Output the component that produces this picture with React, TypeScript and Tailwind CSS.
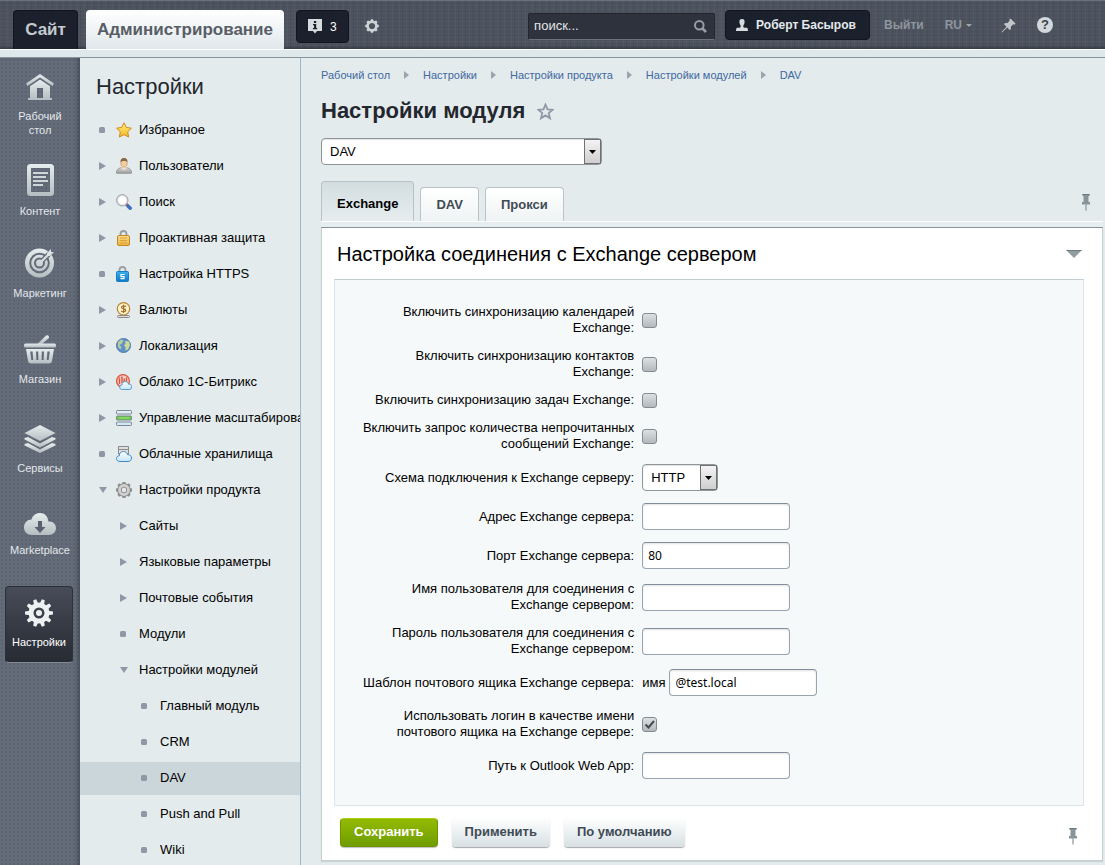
import { useState } from 'react';
import type { ReactNode } from 'react';
import clsx from 'clsx';

type Bullet = 'dot' | 'closed' | 'open';

interface MenuItem {
  label: string;
  bullet: Bullet;
  level: 0 | 1 | 2;
  icon?: ReactNode;
  active?: boolean;
}

/* ---------- shared icons ---------- */

function Teeth({ count, r, w, h }: { count: number; r: number; w: number; h: number }) {
  return (
    <>
      {Array.from({ length: count }, (_, i) => (
        <path
          key={i}
          d={`M${-w / 2 - 0.8} ${-r + h}L${-w / 2} ${-r}H${w / 2}L${w / 2 + 0.8} ${-r + h}Z`}
          transform={`rotate(${(360 / count) * i})`}
        />
      ))}
    </>
  );
}

function PushPin() {
  return (
    <svg width="10" height="17" viewBox="0 0 10 17" fill="#87949a">
      <path d="M1.500 0H8.500V2H7.500V8H9V10.500H1V8H2.500V2H1.500Z" />
      <path d="M4.400 10.500H5.600V16.500H4.400Z" />
      <path d="M1.500 0H8.500V1H1.500Z" fill="#6d797f" />
    </svg>
  );
}

function Defs() {
  return (
    <svg width="0" height="0" className="absolute">
      <defs>
        <linearGradient id="silver" x1="0" y1="0" x2="0" y2="1">
          <stop offset="0" stopColor="#e6edee" />
          <stop offset="1" stopColor="#b4bdc0" />
        </linearGradient>
        <linearGradient id="gold" x1="0" y1="0" x2="0" y2="1">
          <stop offset="0" stopColor="#fff08a" />
          <stop offset="1" stopColor="#f3b71f" />
        </linearGradient>
        <linearGradient id="brass" x1="0" y1="0" x2="0" y2="1">
          <stop offset="0" stopColor="#fbdc8c" />
          <stop offset="1" stopColor="#eeb33f" />
        </linearGradient>
        <linearGradient id="blue" x1="0" y1="0" x2="0" y2="1">
          <stop offset="0" stopColor="#3eb0ee" />
          <stop offset="1" stopColor="#0d79c4" />
        </linearGradient>
        <linearGradient id="cloud" x1="0" y1="0" x2="0" y2="1">
          <stop offset="0" stopColor="#ffffff" />
          <stop offset="1" stopColor="#c3e4fb" />
        </linearGradient>
        <linearGradient id="grey" x1="0" y1="0" x2="0" y2="1">
          <stop offset="0" stopColor="#dcdcdc" />
          <stop offset="1" stopColor="#9b9b9b" />
        </linearGradient>
      </defs>
    </svg>
  );
}

/* ---------- header ---------- */

function Header() {
  return (
    <header className="bg-[#4b525d] bg-[repeating-linear-gradient(90deg,rgba(255,255,255,0.03)_0_1px,transparent_1px_3px,rgba(0,0,0,0.05)_3px_4px,transparent_4px_7px),repeating-linear-gradient(0deg,rgba(255,255,255,0.03)_0_1px,transparent_1px_4px)]">
      <div className="flex h-[49px] items-start border-t border-[#69717b] pt-[9px] shadow-[inset_0_-3px_3px_-1px_rgba(0,0,0,0.25)]">
        <a
          href="#site"
          className="ml-[13px] flex h-[39px] w-[65px] items-center justify-center rounded-t border border-b-0 border-[#12151d] bg-[#1c202d] text-[17px] font-bold text-[#c3cbcf]"
        >
          Сайт
        </a>
        <a
          href="#admin"
          className="ml-2 flex h-[39px] w-[198px] items-center justify-center rounded-t bg-linear-to-b from-white to-[#e0e8eb] text-[17px] font-bold text-[#585d66]"
        >
          Администрирование
        </a>
        <button
          type="button"
          className="ml-3 flex h-[33px] w-[53px] items-center gap-2 rounded border border-[#12151d] bg-[#1c202d] pl-[11px] text-xs text-white"
        >
          <svg width="14" height="15" viewBox="0 0 14 15">
            <path d="M0 0H14V12H9L7 14.500L5 12H0Z" fill="#d5dcdf" />
            <path d="M5.900 2H8.200V4H5.900ZM5 5H8.200V9H9.200V10.200H4.900V9H6V6.200H5Z" fill="#1c202d" />
          </svg>
          3
        </button>
        <button type="button" aria-label="Параметры" className="ml-4 flex h-8 items-center">
          <svg width="14" height="14" viewBox="-7 -7 14 14" fill="#ccd3d6">
            <Teeth count={8} r={6.8} w={2} h={2} />
            <circle r="4.300" fill="none" stroke="#ccd3d6" strokeWidth="2.400" />
          </svg>
        </button>

        <div className="ml-auto mr-[52px] flex items-center">
          <form className="mt-[2px] flex h-[27px] w-[187px] items-center rounded-xs border border-[#23262f] border-b-[#6b727c] bg-[#2e323d] px-[5px]">
            <input
              type="text"
              aria-label="Поиск"
              placeholder="поиск..."
              className="min-w-0 flex-1 bg-transparent text-[13px] text-white placeholder-[#e3e6e8] outline-none"
            />
            <button type="submit" aria-label="Найти" className="mr-[2px]">
              <svg width="13" height="13" viewBox="0 0 13 13" fill="none" stroke="#989da5">
                <circle cx="5.300" cy="5.300" r="4.300" strokeWidth="2" />
                <path d="M8.500 8.500L12 12" strokeWidth="2.600" />
              </svg>
            </button>
          </form>
          <a
            href="#user"
            className="ml-2.5 flex h-[30px] w-[145px] items-center gap-2 rounded border border-[#12151d] bg-[#1b202d] pl-2.5 text-xs font-bold text-[#e4eaec]"
          >
            <svg width="12" height="13" viewBox="0 0 12 13" fill="#d5dcdf">
              <path d="M6 0C7.900 0 8.700 1.300 8.600 3C8.500 4.800 7.700 6 7.300 6.800C7.100 8 7.500 8.300 8.500 8.800H11C11.700 9.300 12 10.500 12 12H0C0 10.500 0.300 9.300 1 8.800H3.500C4.500 8.300 4.900 8 4.700 6.800C4.300 6 3.500 4.800 3.400 3C3.300 1.300 4.100 0 6 0Z" />
            </svg>
            Роберт Басыров
          </a>
          <a href="#logout" className="ml-[14px] text-xs font-bold text-[#8f969e]">
            Выйти
          </a>
          <button type="button" className="ml-[21px] flex items-center gap-1 text-xs font-bold text-[#8f969e]">
            RU
            <svg width="6" height="3" viewBox="0 0 6 3" fill="#a0a6ad">
              <path d="M0 0H6L3 3Z" />
            </svg>
          </button>
          <button type="button" aria-label="Закрепить" className="ml-[29px]">
            <svg width="15" height="15" viewBox="0 0 15 15" fill="#c0c6ca">
              <path d="M9.500 0.500L14.500 5.500L13.500 6.700L12.300 6.300L9.800 8.800C10.100 10.200 9.900 11.300 9 12.200L6.300 9.500L1.300 14.200L0.500 14.500L0.800 13.700L5.500 8.700L2.800 6C3.700 5.100 4.800 4.900 6.200 5.200L8.700 2.700L8.300 1.500Z" />
            </svg>
          </button>
          <button
            type="button"
            aria-label="Справка"
            className="ml-[21px] flex size-4 items-center justify-center rounded-full bg-[#d2d8db] text-[13px] leading-4 font-bold text-[#3c424d]"
          >
            ?
          </button>
        </div>
      </div>
      <div className="h-[9px] border-t border-b border-t-white border-b-[#87959b] bg-[#dfe8eb]" />
    </header>
  );
}

/* ---------- left column ---------- */

const sections: { label: string; top: string; icon: ReactNode }[] = [
  {
    label: 'Рабочий стол',
    top: 'mt-4',
    icon: (
      <svg width="28" height="27" viewBox="0 0 28 27" fill="url(#silver)">
        <path d="M14 0L28 9.500L26.500 12L14 3.600L1.500 12L0 9.500Z" />
        <path d="M14 5.500L24 12.200V24H26V26H2V24H4V12.200ZM11 14V24H17V14Z" fillRule="evenodd" />
      </svg>
    ),
  },
  {
    label: 'Контент',
    top: 'mt-[27px]',
    icon: (
      <svg width="27" height="32" viewBox="0 0 27 32">
        <path
          d="M3.500 0H23.500Q27 0 27 3.500V28.500Q27 32 23.500 32H3.500Q0 32 0 28.500V3.500Q0 0 3.500 0ZM4 4V28H23V4Z"
          fill="url(#silver)"
          fillRule="evenodd"
        />
        <path d="M6 8H21V10H6ZM6 12H19V14H6ZM6 16H21V18H6ZM6 20H16V22H6Z" fill="#ced6d8" />
      </svg>
    ),
  },
  {
    label: 'Маркетинг',
    top: 'mt-[30px]',
    icon: (
      <svg width="30" height="30" viewBox="0 0 30 30">
        <circle cx="14.500" cy="15" r="14.500" fill="url(#silver)" />
        <circle cx="14.500" cy="15" r="9.300" fill="none" stroke="#646b79" strokeWidth="2" />
        <circle cx="14.500" cy="15" r="4.500" fill="none" stroke="#646b79" strokeWidth="2" />
        <path d="M18 12L27 3" stroke="#646b79" strokeWidth="5" />
        <path d="M14.500 15.500L24 6" stroke="#d4dbdd" strokeWidth="2.400" />
        <path d="M22 5L26 1V4H29L25 8H22Z" fill="#dde3e5" />
      </svg>
    ),
  },
  {
    label: 'Магазин',
    top: 'mt-[35px]',
    icon: (
      <svg width="32" height="29" viewBox="0 0 32 29" fill="url(#silver)">
        <path d="M22 0.500Q24 -0.500 25 1.500L25 3L18 9H13.500Z" />
        <rect y="8.500" width="32" height="4" rx="1.500" />
        <path
          d="M2 14H30L28 26Q27.500 28.500 25 28.500H7Q4.500 28.500 4 26ZM6.200 16.500L7.300 25H9.200L8.600 16.500ZM12 16.500L12.400 25H14.400L14.200 16.500ZM17.800 16.500L17.600 25H19.600L20 16.500ZM23.400 16.500L22.800 25H24.700L25.800 16.500Z"
          fillRule="evenodd"
        />
      </svg>
    ),
  },
  {
    label: 'Сервисы',
    top: 'mt-[39px]',
    icon: (
      <svg width="32" height="28" viewBox="0 0 32 28" fill="url(#silver)">
        <path d="M16 0L31.500 8L16 16L0.500 8Z" />
        <path d="M0.500 13L4 12L16 18.500L28 12L31.500 13V14.500L16 22.500L0.500 14.500Z" />
        <path d="M0.500 19L4 18L16 24.500L28 18L31.500 19V20.500L16 28L0.500 20.500Z" />
      </svg>
    ),
  },
  {
    label: 'Marketplace',
    top: 'mt-[38px]',
    icon: (
      <svg width="32" height="22" viewBox="0 0 32 22">
        <path
          d="M8 22C3 22 0 18.500 0 14.500C0 10 3.500 6.500 7.500 6.500C8.500 2.500 12 0 16 0C20.500 0 24 3 24.300 8.500C28.500 8 32 11 32 15C32 19 29 22 25 22Z"
          fill="url(#silver)"
        />
        <path d="M14 8H18V14H21.500L16 20L10.500 14H14Z" fill="#5a616e" />
      </svg>
    ),
  },
];

function LeftColumn() {
  return (
    <nav
      aria-label="Разделы"
      className="flex w-20 shrink-0 flex-col bg-[#646b79] bg-[radial-gradient(rgba(40,46,60,0.14)_1px,transparent_1px)] bg-size-[4px_4px] shadow-[inset_-4px_0_4px_-2px_rgba(0,0,0,0.3)]"
    >
      {sections.map((s) => (
        <a
          key={s.label}
          href={`#${s.label}`}
          className={clsx('flex flex-col items-center gap-2 px-2.5 text-center text-[11px] leading-[14px] text-[#e3e8ea]', s.top)}
        >
          {s.icon}
          {s.label}
        </a>
      ))}
      <a
        href="#settings"
        aria-current="page"
        className="mt-[29px] ml-[5px] flex h-[77px] w-[68px] flex-col items-center gap-2 rounded border border-[#2c3039] border-b-[#838995] bg-linear-to-b from-[#474c58] to-[#272b33] pt-3 text-[11px] leading-[14px] whitespace-nowrap text-white"
      >
        <svg width="28" height="28" viewBox="-14 -14 28 28" fill="#eef1f2" className="shrink-0">
          <g transform="rotate(18)">
            <Teeth count={10} r={14} w={3} h={5} />
          </g>
          <circle r="8" fill="none" stroke="#eef1f2" strokeWidth="5" />
          <circle r="3" />
        </svg>
        Настройки
      </a>
    </nav>
  );
}

/* ---------- settings tree ---------- */

const cloudPath = 'M4 16C1.500 16 0.500 14.500 0.500 13C0.500 11.300 1.800 10.300 3.300 10.300C3.300 7.500 5 6 7.500 6C9.500 6 11 7.200 11.500 9.200C14 9 15.500 10.500 15.500 12.600C15.500 14.700 14 16 12 16Z';

const menu: MenuItem[] = [
  {
    label: 'Избранное',
    bullet: 'dot',
    level: 0,
    icon: <path d="M8 0.800L10.300 5.400L15.400 6.200L11.700 9.800L12.600 15L8 12.600L3.400 15L4.300 9.800L0.600 6.200L5.700 5.400Z" fill="url(#gold)" stroke="#d08a1a" strokeLinejoin="round" />,
  },
  {
    label: 'Пользователи',
    bullet: 'closed',
    level: 0,
    icon: (
      <>
        <path d="M0.500 15.300C0.500 11.500 2 10.500 5.500 9.500H10.500C14 10.500 15.500 11.500 15.500 15.300Z" fill="url(#grey)" stroke="#8a8a8a" strokeWidth="0.800" />
        <path d="M5.500 9.500L8 12.500L10.500 9.500V7H5.500Z" fill="#f6e3c8" />
        <ellipse cx="8" cy="4.800" rx="3.200" ry="4.300" fill="#f3cf9f" stroke="#b98a58" strokeWidth="0.600" />
        <path d="M4.700 4.300C4.300 1 6 0 8 0C10 0 11.700 1 11.300 4.300C10.500 2.600 6 2.600 4.700 4.300Z" fill="#8a6745" />
      </>
    ),
  },
  {
    label: 'Поиск',
    bullet: 'closed',
    level: 0,
    icon: (
      <>
        <path d="M10 10L12.500 12.500" stroke="#d9483f" strokeWidth="3" />
        <path d="M12 12L14.200 14.200" stroke="#3972c2" strokeWidth="3.500" strokeLinecap="round" />
        <circle cx="6.300" cy="6.300" r="5.700" fill="#d9dee2" stroke="#9aa0a6" />
        <circle cx="6.300" cy="6.300" r="4.200" fill="#fff" />
      </>
    ),
  },
  {
    label: 'Проактивная защита',
    bullet: 'closed',
    level: 0,
    icon: (
      <>
        <path d="M4.500 7V4Q4.500 1 7.500 1Q10.500 1 10.500 4V7" fill="none" stroke="#999ea3" strokeWidth="1.800" />
        <rect x="1.500" y="5.500" width="12" height="10" rx="1.500" fill="url(#brass)" stroke="#c18625" />
        <path d="M4 8H11M4 10.500H11M4 13H11" stroke="#dca43c" />
      </>
    ),
  },
  {
    label: 'Настройка HTTPS',
    bullet: 'dot',
    level: 0,
    icon: (
      <>
        <path d="M3.500 7V4Q3.500 1 6.500 1Q9.500 1 9.500 4V7" fill="none" stroke="#999ea3" strokeWidth="1.800" />
        <rect x="0.500" y="5.500" width="12" height="10" rx="1" fill="url(#blue)" stroke="#1680c5" />
        <path d="M8.500 8.500H5V10.600H8V12.700H4.500" fill="none" stroke="#fff" strokeWidth="1.200" />
      </>
    ),
  },
  {
    label: 'Валюты',
    bullet: 'closed',
    level: 0,
    icon: (
      <>
        <rect x="1.500" y="13.500" width="12" height="2" rx="1" fill="#ddd" stroke="#888" />
        <circle cx="7.500" cy="6.800" r="6.200" fill="#fff3cf" stroke="#ba8331" strokeWidth="1.200" />
        <path d="M10 4.500C9 3.500 5.500 3.500 5.500 5.300C5.500 7.300 9.800 6.300 9.800 8.300C9.800 10 6.500 10.200 5.200 9M7.600 2.800V11" fill="none" stroke="#a86f22" strokeWidth="1.200" />
      </>
    ),
  },
  {
    label: 'Локализация',
    bullet: 'closed',
    level: 0,
    icon: (
      <>
        <circle cx="7.500" cy="7.500" r="7" fill="#5e91cf" stroke="#55789f" />
        <path d="M2 4L5 1.500L7.500 2.500L6 5.500L3.500 7L5.500 9L4.500 11.500L2 9Z" fill="#b9cd9a" />
        <path d="M9 3L13 3.500L14 7L12 11.500L9.500 12.500L9.500 9L8 7.500L9.500 5.500Z" fill="#cddb96" />
      </>
    ),
  },
  {
    label: 'Облако 1С-Битрикс',
    bullet: 'closed',
    level: 0,
    icon: (
      <>
        <circle cx="7" cy="7" r="6.400" fill="#f3d0c8" stroke="#d9573f" strokeWidth="1.300" />
        <path d="M3.500 3.500V10M6 2.500V9M8.200 4.500V8M10.500 3.500V8" stroke="#d9573f" strokeWidth="1.400" />
        <g transform="translate(3.300 2.800) scale(0.800)">
          <path d={cloudPath} fill="url(#cloud)" stroke="#5291ce" strokeWidth="1.200" />
        </g>
      </>
    ),
  },
  {
    label: 'Управление масштабирова',
    bullet: 'closed',
    level: 0,
    icon: (
      <>
        <rect x="0.500" y="0.500" width="15" height="3.500" rx="0.800" fill="#e2edf5" stroke="#7c8992" />
        <rect x="0.500" y="6" width="15" height="4" rx="0.800" fill="#67c83d" stroke="#7c8992" />
        <rect x="0.500" y="12" width="15" height="3.500" rx="0.800" fill="#d3e8f5" stroke="#7c8992" />
        <path d="M2.500 8H13.500" stroke="#a5e883" />
      </>
    ),
  },
  {
    label: 'Облачные хранилища',
    bullet: 'dot',
    level: 0,
    icon: (
      <>
        <path d="M2.500 0.500H12.500V8H2.500ZM2.500 3.500H12.500" fill="#dedede" stroke="#8a8a8a" />
        <g transform="translate(0 -0.500)">
          <path d={cloudPath} fill="url(#cloud)" stroke="#4387c7" />
        </g>
      </>
    ),
  },
  {
    label: 'Настройки продукта',
    bullet: 'open',
    level: 0,
    icon: (
      <g transform="translate(8 8)">
        <g fill="#8d8d8d">
          <Teeth count={8} r={8} w={2.8} h={3} />
        </g>
        <circle r="4.500" fill="none" stroke="#8d8d8d" strokeWidth="4.600" />
        <circle r="4.500" fill="none" stroke="#cfcfcf" strokeWidth="2.800" />
      </g>
    ),
  },
  { label: 'Сайты', bullet: 'closed', level: 1 },
  { label: 'Языковые параметры', bullet: 'closed', level: 1 },
  { label: 'Почтовые события', bullet: 'closed', level: 1 },
  { label: 'Модули', bullet: 'dot', level: 1 },
  { label: 'Настройки модулей', bullet: 'open', level: 1 },
  { label: 'Главный модуль', bullet: 'dot', level: 2 },
  { label: 'CRM', bullet: 'dot', level: 2 },
  { label: 'DAV', bullet: 'dot', level: 2, active: true },
  { label: 'Push and Pull', bullet: 'dot', level: 2 },
  { label: 'Wiki', bullet: 'dot', level: 2 },
];

const bulletPaths: Record<Bullet, string> = {
  dot: 'M1.500 1H4.500Q6 1 6 2.500V5.500Q6 7 4.500 7H1.500Q0 7 0 5.500V2.500Q0 1 1.500 1Z',
  closed: 'M0 0L7 4L0 8Z',
  open: 'M0 1H8L4 7Z',
};

const indents = ['gap-[9px] pl-[19px]', 'gap-[11px] pl-10', 'gap-[11px] pl-[61px]'];

function MenuTree() {
  return (
    <nav
      aria-label="Настройки"
      className="flex w-[221px] shrink-0 flex-col overflow-hidden border-r border-[#9fb7cc] pt-4"
    >
      <h2 className="mb-[14px] pl-4 text-[22px] leading-[26px] text-[#23272d]">Настройки</h2>
      <ul className="flex flex-col gap-[3px]">
        {menu.map((item) => (
          <li key={item.label} className={clsx(item.active && 'bg-[#cbd6da]')}>
            <a
              href={`#${item.label}`}
              className={clsx('flex h-[33px] items-center pb-[2px] text-[13px] whitespace-nowrap text-black', indents[item.level])}
            >
              <svg width="8" height="8" viewBox="0 0 8 8" fill="#8f99a6" className="shrink-0">
                <path d={bulletPaths[item.bullet]} />
              </svg>
              <span className="flex items-center gap-[7px]">
                {item.icon && (
                  <svg width="16" height="16" viewBox="0 0 16 16" className="shrink-0">
                    {item.icon}
                  </svg>
                )}
                {item.label}
              </span>
            </a>
          </li>
        ))}
      </ul>
    </nav>
  );
}

/* ---------- form controls ---------- */

const inputClass =
  'h-[27px] w-[148px] rounded border border-[#9aa4b1] border-t-[#838e9c] bg-white px-[5px] font-[Noto_Sans,sans-serif] text-xs text-black shadow-[inset_0_1px_2px_rgba(0,0,0,0.12)] outline-none';

function Select({ id, label, options, className }: { id: string; label?: string; options: string[]; className: string }) {
  return (
    <div className={clsx('relative h-[27px]', className)}>
      <select
        id={id}
        aria-label={label}
        className="size-full appearance-none rounded border border-[#8f9699] bg-white pl-2 text-[13px] text-black shadow-[inset_0_1px_1px_rgba(0,0,0,0.12)] outline-none"
      >
        {options.map((o) => (
          <option key={o}>{o}</option>
        ))}
      </select>
      <span className="pointer-events-none absolute inset-y-px right-px flex w-[17px] items-center justify-center border border-[#6f7173] bg-linear-to-b from-[#f4f4f4] to-[#cfcfcf]">
        <svg width="7" height="4" viewBox="0 0 7 4">
          <path d="M0 0H7L3.500 4Z" />
        </svg>
      </span>
    </div>
  );
}

function Checkbox({ id, initial = false }: { id: string; initial?: boolean }) {
  const [checked, setChecked] = useState(initial);
  return (
    <span className="relative flex">
      <input
        id={id}
        type="checkbox"
        checked={checked}
        onChange={(e) => setChecked(e.target.checked)}
        className="size-[15px] appearance-none rounded-[3px] border border-[#848c91] bg-linear-to-b from-[#dde0e1] to-[#b3b9bc]"
      />
      {checked && (
        <svg width="15" height="15" viewBox="0 0 15 15" className="pointer-events-none absolute inset-0">
          <path d="M3.500 7.500L6.500 10.500L12 4" fill="none" stroke="#444b50" strokeWidth="2" />
        </svg>
      )}
    </span>
  );
}

function Row({ id, label, children }: { id: string; label: string; children: ReactNode }) {
  return (
    <div className="flex items-center py-1.5 text-[13px] leading-4">
      <label htmlFor={id} className="w-2/5 shrink-0 pl-6 text-right">
        {label}
      </label>
      <div className="flex items-center gap-1 pl-2">{children}</div>
    </div>
  );
}

/* ---------- main area ---------- */

const crumbs = ['Рабочий стол', 'Настройки', 'Настройки продукта', 'Настройки модулей', 'DAV'];

const modules = ['DAV', 'Главный модуль', 'CRM', 'Push and Pull', 'Wiki'];

function Tabs() {
  return (
    <div className="flex items-end">
      <div role="tablist" className="flex items-end gap-1.5 text-[13px] font-bold">
        <button
          type="button"
          role="tab"
          aria-selected="true"
          className="h-10 rounded-t border border-b-0 border-[#b7c2c6] bg-linear-to-b from-[#d3dde0] to-[#e6edef] px-[15px] pt-1 text-black"
        >
          Exchange
        </button>
        {['DAV', 'Прокси'].map((t) => (
          <button
            key={t}
            type="button"
            role="tab"
            aria-selected="false"
            className="h-[34px] rounded-t border border-b-0 border-[#bac4c8] bg-linear-to-b from-white to-[#eff3f4] px-[15px] text-[#3f4b54]"
          >
            {t}
          </button>
        ))}
      </div>
      <button type="button" aria-label="Закрепить вкладки" className="mr-3 mb-[10px] ml-auto">
        <PushPin />
      </button>
    </div>
  );
}

function SettingsForm() {
  return (
    <form className="flex flex-col border border-t-0 border-[#c6d1d4] bg-white px-3 pb-[13px] shadow-[0_1px_1px_rgba(0,0,0,0.1)]">
      <div className="flex h-[51px] items-center justify-between pt-px pr-2 pl-[3px]">
        <h2 className="text-[20px] leading-6 text-black">Настройка соединения с Exchange сервером</h2>
        <button type="button" aria-label="Свернуть">
          <svg width="16" height="8" viewBox="0 0 16 8">
            <path d="M0 0H16L8 8Z" fill="#929da2" />
            <path d="M0 0H16L15 1H1Z" fill="#6e797e" />
          </svg>
        </button>
      </div>
      <div className="mr-[6px] border border-[#dbe5ea] border-t-[#c3cdd1] bg-[#f5f9fa] pt-[18px] pb-5">
        <Row id="calendar" label="Включить синхронизацию календарей Exchange:">
          <Checkbox id="calendar" />
        </Row>
        <Row id="contacts" label="Включить синхронизацию контактов Exchange:">
          <Checkbox id="contacts" />
        </Row>
        <Row id="tasks" label="Включить синхронизацию задач Exchange:">
          <Checkbox id="tasks" />
        </Row>
        <Row id="mail" label="Включить запрос количества непрочитанных сообщений Exchange:">
          <Checkbox id="mail" />
        </Row>
        <Row id="scheme" label="Схема подключения к Exchange серверу:">
          <Select id="scheme" options={['HTTP', 'HTTPS']} className="w-[76px]" />
        </Row>
        <Row id="server" label="Адрес Exchange сервера:">
          <input id="server" type="text" className={inputClass} />
        </Row>
        <Row id="port" label="Порт Exchange сервера:">
          <input id="port" type="text" defaultValue="80" className={inputClass} />
        </Row>
        <Row id="username" label="Имя пользователя для соединения с Exchange сервером:">
          <input id="username" type="text" className={inputClass} />
        </Row>
        <Row id="password" label="Пароль пользователя для соединения с Exchange сервером:">
          <input id="password" type="password" className={inputClass} />
        </Row>
        <Row id="mailbox" label="Шаблон почтового ящика Exchange сервера:">
          имя
          <input id="mailbox" type="text" defaultValue="@test.local" className={inputClass} />
        </Row>
        <Row id="login" label="Использовать логин в качестве имени почтового ящика на Exchange сервере:">
          <Checkbox id="login" initial />
        </Row>
        <Row id="owa" label="Путь к Outlook Web App:">
          <input id="owa" type="text" className={inputClass} />
        </Row>
      </div>
      <div className="mt-3 flex items-center gap-[14px] pl-[6px] text-[13px] font-bold">
        <button
          type="submit"
          className="h-[29px] rounded border border-[#6c9500] border-t-[#a9cf10] bg-linear-to-b from-[#94ba04] to-[#6f9d00] px-[13px] pb-0.5 text-white shadow-[0_1px_1px_rgba(0,0,0,0.25)]"
        >
          Сохранить
        </button>
        <button
          type="button"
          className="h-[29px] rounded bg-linear-to-b from-white to-[#d7e0e4] px-[13px] pb-0.5 text-[#3f4b54] shadow-[0_1px_1px_rgba(0,0,0,0.35)]"
        >
          Применить
        </button>
        <button
          type="button"
          className="h-[29px] rounded bg-linear-to-b from-white to-[#d7e0e4] px-[13px] pb-0.5 text-[#3f4b54] shadow-[0_1px_1px_rgba(0,0,0,0.35)]"
        >
          По умолчанию
        </button>
        <button type="button" aria-label="Закрепить панель" className="mt-2 mr-3 ml-auto">
          <PushPin />
        </button>
      </div>
    </form>
  );
}

export default function App() {
  return (
    <div className="flex min-h-screen flex-col bg-[#e3ebed] font-[Liberation_Sans,Arial,sans-serif] text-black">
      <Defs />
      <Header />
      <div className="flex flex-1">
        <LeftColumn />
        <MenuTree />
        <main className="min-w-0 flex-1 pr-0.5 pl-5">
          <ol className="flex items-center gap-[14px] pt-2.5 text-[11px] leading-[14px] text-[#41689e]">
            {crumbs.map((c, i) => (
              <li key={c} className="flex items-center gap-[14px]">
                {i > 0 && (
                  <svg width="5" height="8" viewBox="0 0 5 8" fill="#98a4ae">
                    <path d="M0 0L5 4L0 8Z" />
                  </svg>
                )}
                <a href={`#crumb-${i}`}>{c}</a>
              </li>
            ))}
          </ol>
          <div className="mt-4 flex items-center gap-3">
            <h1 className="text-[22px] leading-[26px] font-bold text-[#23272d]">Настройки модуля</h1>
            <button type="button" aria-label="Добавить в избранное">
              <svg width="17" height="17" viewBox="0 0 17 17" fill="none" stroke="#8e99a5" strokeWidth="1.800">
                <path d="M8.500 1.500L10.500 6.300L15.700 6.700L11.700 10L13 15.300L8.500 12.400L4 15.300L5.300 10L1.300 6.700L6.500 6.300Z" />
              </svg>
            </button>
          </div>
          <div className="mt-[14px] mb-4">
            <Select id="module" label="Модуль" options={modules} className="w-[281px]" />
          </div>
          <Tabs />
          <div className="h-[7px] border-t border-b border-t-white border-b-[#87959b] bg-[#e6edef]" />
          <SettingsForm />
        </main>
      </div>
    </div>
  );
}
